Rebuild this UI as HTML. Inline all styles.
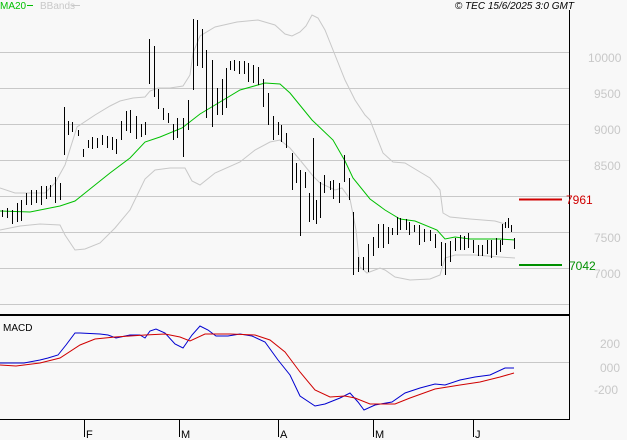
<!DOCTYPE html>
<html><head><style>
body{margin:0;background:#f8f8f8;}
svg{display:block;font-family:"Liberation Sans",sans-serif;}
</style></head><body>
<svg width="627" height="440" viewBox="0 0 627 440">
<rect width="627" height="440" fill="#f8f8f8"/>
<g stroke="#c8c8c8" stroke-width="1">
<line x1="0" y1="52.5" x2="569" y2="52.5"/><line x1="0" y1="88.5" x2="569" y2="88.5"/>
<line x1="0" y1="124.5" x2="569" y2="124.5"/><line x1="0" y1="160.5" x2="569" y2="160.5"/>
<line x1="0" y1="196.5" x2="569" y2="196.5"/><line x1="0" y1="232.5" x2="569" y2="232.5"/>
<line x1="0" y1="268.5" x2="569" y2="268.5"/><line x1="0" y1="304.5" x2="569" y2="304.5"/>
<line x1="0" y1="362.5" x2="569" y2="362.5"/>
</g>
<g fill="none" stroke="#c8c8c8" stroke-width="1">
<polyline points="0,188 15,193 45,193 55,183 65,165 77,127 95,115 110,106 120,101 133,98 145,97 150,91 158,88 170,88 183,86 190,75 193,53 200,36 215,27 237,22 258,20 275,25 285,34 292,36 300,32 306,26 312,15 318,18 325,30 335,55 345,80 355,100 365,115 370,120 383,153 393,162 405,163 420,172 430,178 440,190 443,213 450,217 470,219 495,221 505,224"/>
<polyline points="0,230 20,226 40,224 60,225 65,235 75,250 85,249 100,243 115,228 130,210 145,179 155,170 170,168 185,168 192,181 200,185 215,173 240,162 255,150 270,142 280,140 290,148 300,160 313,176 320,183 335,190 342,188 350,199 356,230 360,267 367,273 380,268 385,270 395,277 410,280 430,279 440,275 445,258 455,255 475,255 500,257 515,258"/>
</g>
<polyline fill="none" stroke="#00c000" stroke-width="1" points="0,211 30,212 60,206 75,201 90,189 110,173 130,158 145,142 160,137 182,128 200,114 215,105 240,90 265,83 280,84 290,93 312,120 333,140 345,161 353,178 370,199 385,210 400,219 415,221 437,230 445,239 455,237 470,239 500,239 515,240"/>
<path transform="translate(0.5,0)" shape-rendering="crispEdges" fill="none" stroke="#000" stroke-width="1" d="M2,210V217M7,208V218M12,210V224M17,203V222M21,200V221M26,193V205M31,190V205M36,190V203M41,186V205M46,186V199M50,185V197M55,177V203M60,183V200M64,107V155M68,121V135M72,122V132M78,130V136M83,149V157M88,140V148M92,137V149M97,138V148M102,135V145M107,136V148M112,137V150M116,139V154M121,121V140M126,111V131M130,110V133M136,116V139M141,124V137M145,122V135M149,39V84M154,46V97M158,89V109M163,108V120M168,113V123M173,124V140M177,118V138M183,118V157M188,100V130M193,19V90M197,20V66M202,29V68M206,50V118M212,60V127M217,88V115M222,79V115M226,68V108M230,61V70M234,60V71M239,61V74M244,61V74M248,63V82M253,65V83M258,67V85M263,79V107M268,93V125M273,116V140M278,122V135M281,125V142M286,133V148M292,153V190M296,163V183M300,170V236M305,172V188M309,193V222M313,138V220M316,200V224M320,182V218M324,175V193M330,181V190M333,180V199M339,183V203M344,155V182M349,178V200M353,212V275M358,257V272M363,257V270M368,244V272M373,237V256M378,224V248M383,224V248M388,227V244M392,228V235M397,217V235M400,218V230M406,219V230M409,222V235M414,225V232M419,225V245M424,229V242M430,230V241M435,234V248M441,242V266M445,243V275M450,241V262M455,238V251M460,235V250M464,236V250M468,233V248M473,240V253M478,245V256M482,245V256M487,240V254M491,240V258M496,238V255M500,240V252M502,224V245M505,222V228M508,218V228M511,225V232M514,238V249"/>
<line x1="519" y1="199.5" x2="562" y2="199.5" stroke="#d00000" stroke-width="2"/>
<line x1="519" y1="265" x2="562" y2="265" stroke="#009000" stroke-width="2"/>
<line x1="0" y1="315" x2="570" y2="315" stroke="#000" stroke-width="2"/>
<line x1="569.5" y1="10" x2="569.5" y2="419" stroke="#000"/>
<line x1="0" y1="419.5" x2="570" y2="419.5" stroke="#000"/>
<g stroke="#000" shape-rendering="crispEdges"><line x1="84.5" y1="419" x2="84.5" y2="437"/><line x1="179.5" y1="419" x2="179.5" y2="437"/><line x1="278.5" y1="419" x2="278.5" y2="437"/><line x1="373.5" y1="419" x2="373.5" y2="437"/><line x1="473.5" y1="419" x2="473.5" y2="437"/></g>
<g font-size="11" fill="#000"><text x="86" y="438">F</text><text x="181" y="438">M</text><text x="280" y="438">A</text><text x="375" y="438">M</text><text x="475" y="438">J</text></g>
<polyline fill="none" stroke="#0000d0" stroke-width="1" points="0,363 24,363 40,360 48,358 58,355 66,345 75,333 80,333 100,334 108,335 116,338 130,335 140,335 145,338 150,331 156,329 165,333 175,344 183,348 192,335 200,326 208,330 216,336 228,336 240,334 252,336 265,342 278,360 290,375 300,396 315,406 325,404 340,398 350,393 358,402 364,410 375,405 392,402 405,393 420,388 435,384 445,385 460,380 475,377 490,375 505,368 514,368"/>
<polyline fill="none" stroke="#d00000" stroke-width="1" points="0,365 16,366 40,363 60,358 80,345 95,339 115,337 130,336 145,335 165,334 180,337 190,341 205,334 230,334 255,335 270,340 285,352 300,372 315,390 330,397 345,396 355,398 370,404 395,404 410,398 435,389 460,385 480,382 500,377 514,373"/>
<text x="3" y="331" font-size="10" fill="#000">MACD</text>
<g font-size="12" fill="#c8c8c8"><text x="588" y="62">10000</text><text x="594" y="98">9500</text><text x="594" y="134">9000</text><text x="594" y="170">8500</text><text x="594" y="242">7500</text><text x="594" y="278">7000</text>
<text x="600" y="348">200</text><text x="600" y="372">000</text><text x="594" y="394">-200</text></g>
<text x="566" y="204" font-size="12" fill="#d00000">7961</text>
<text x="569" y="270" font-size="12" fill="#009000">7042</text>
<text x="0" y="9" font-size="10" fill="#00c000">MA20</text><line x1="27" y1="5.5" x2="33" y2="5.5" stroke="#00c000"/>
<text x="40" y="9" font-size="10" fill="#c8c8c8">BBands</text><line x1="72" y1="5.5" x2="80" y2="5.5" stroke="#c8c8c8"/>
<text x="574" y="9" font-size="10" font-style="italic" fill="#000" text-anchor="end">© TEC 15/6/2025 3:0 GMT</text>
</svg>
</body></html>
